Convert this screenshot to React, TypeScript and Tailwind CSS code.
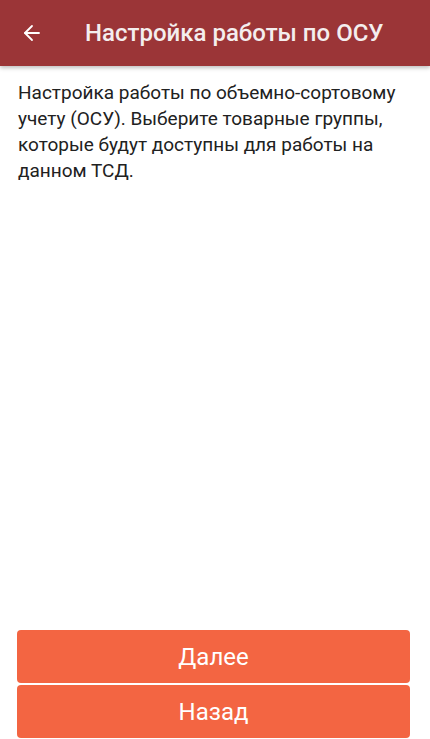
import { ArrowLeft } from "lucide-react";

export default function App() {
  return (
    <div className="flex h-[739px] w-[430px] flex-col bg-white font-['Roboto',sans-serif]">
      <header className="relative z-10 flex h-[66px] shrink-0 items-center bg-[#9b3537] shadow-[0_2px_4px_rgba(0,0,0,0.25)]">
        <button type="button" className="ml-[20px] flex h-6 w-6 items-center justify-center text-white">
          <ArrowLeft className="h-[24px] w-[24px]" strokeWidth={1.8} />
        </button>
        <h1 className="ml-[41px] text-[24px] font-medium text-[#f4eeee]">
          Настройка работы по ОСУ
        </h1>
      </header>

      <p className="px-[18px] pt-[14px] text-[19px] leading-[26px] text-[#212121]">
        Настройка работы по объемно-сортовому учету (ОСУ). Выберите товарные группы, которые будут доступны для работы на данном ТСД.
      </p>

      <div className="mt-auto flex flex-col gap-[2px] pb-[1px] pl-[17px] pr-[20px]">
        <button type="button" className="h-[53px] rounded-[4px] bg-[#f36542] text-[24px] text-white">
          Далее
        </button>
        <button type="button" className="h-[53px] rounded-[4px] bg-[#f36542] text-[24px] text-white">
          Назад
        </button>
      </div>
    </div>
  );
}
